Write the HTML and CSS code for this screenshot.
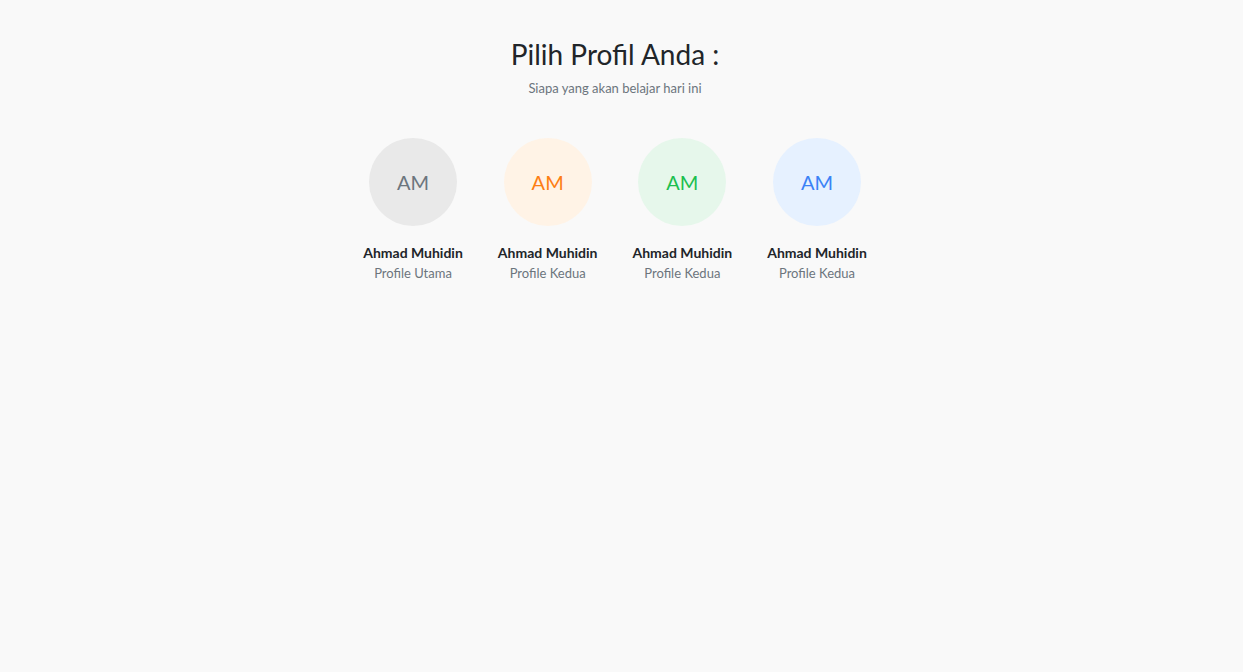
FILE: index.html
```html
<!DOCTYPE html>
<html lang="id">
<head>
<meta charset="utf-8">
<title>Pilih Profil</title>
<link rel="stylesheet" href="styles.css">
</head>
<body>
<main class="page">
  <header class="head">
    <h1 class="title">Pilih Profil Anda :</h1>
    <p class="subtitle">Siapa yang akan belajar hari ini</p>
  </header>
  <section class="profiles">
    <div class="profile">
      <div class="avatar avatar-gray">AM</div>
      <div class="name">Ahmad Muhidin</div>
      <div class="role">Profile Utama</div>
    </div>
    <div class="profile">
      <div class="avatar avatar-orange">AM</div>
      <div class="name">Ahmad Muhidin</div>
      <div class="role">Profile Kedua</div>
    </div>
    <div class="profile">
      <div class="avatar avatar-green">AM</div>
      <div class="name">Ahmad Muhidin</div>
      <div class="role">Profile Kedua</div>
    </div>
    <div class="profile">
      <div class="avatar avatar-blue">AM</div>
      <div class="name">Ahmad Muhidin</div>
      <div class="role">Profile Kedua</div>
    </div>
  </section>
</main>
</body>
</html>
```

FILE: styles.css
```css
html, body {
  margin: 0;
  padding: 0;
  background: #f9f9f9;
  font-family: Lato, "Open Sans", sans-serif;
  color: #212529;
}
.page {
  width: 1230px;
  min-height: 672px;
  padding-top: 36px;
  box-sizing: border-box;
}
.head {
  text-align: center;
}
.title {
  margin: 0;
  font-size: 28px;
  font-weight: 400;
  line-height: 36px;
  color: #212529;
}
.subtitle {
  margin: 6px 0 0;
  font-size: 13px;
  line-height: 20px;
  color: #6c757d;
}
.profiles {
  display: flex;
  justify-content: center;
  margin-top: 40px;
}
.profile {
  width: 134.67px;
  display: flex;
  flex-direction: column;
  align-items: center;
}
.avatar {
  width: 88px;
  height: 88px;
  border-radius: 50%;
  display: flex;
  align-items: center;
  justify-content: center;
  font-size: 20px;
  margin-bottom: 18px;
}
.avatar-gray { background: #e9e9e9; color: #6c757d; }
.avatar-orange { background: #fff3e6; color: #fd7e14; }
.avatar-green { background: #e6f7eb; color: #1cbf4f; }
.avatar-blue { background: #e6f1ff; color: #3b82f6; }
.name {
  font-size: 14px;
  font-weight: 700;
  line-height: 18px;
  color: #212529;
}
.role {
  margin-top: 2px;
  font-size: 13px;
  line-height: 18px;
  color: #6c757d;
}
```
